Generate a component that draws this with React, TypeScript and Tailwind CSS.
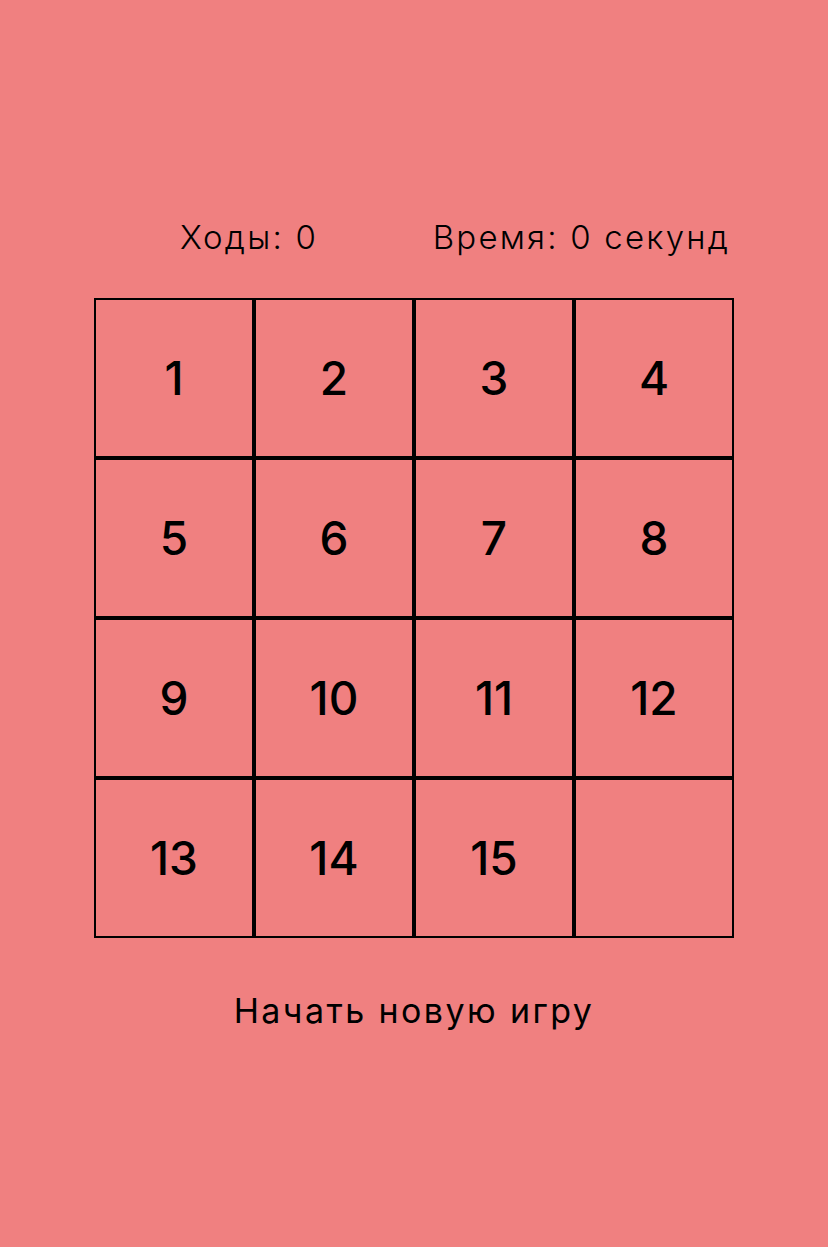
import React from "react";

export default function App() {
  const cells = [1, 2, 3, 4, 5, 6, 7, 8, 9, 10, 11, 12, 13, 14, 15, 0];
  return (
    <div
      className="w-[828px] h-[1247px] bg-[#f08080] text-black flex flex-col items-center"
      style={{ fontFamily: "Inter, 'Noto Sans', sans-serif" }}
    >
      <div className="w-[640px] h-[60px] mt-[207px] flex items-center text-[33px] font-light leading-none tracking-[2.2px]">
        <span className="ml-[86px]">Ходы: 0</span>
        <span className="ml-auto mr-[4px]">Время: 0 секунд</span>
      </div>
      <div className="mt-[31px] grid grid-cols-4 w-[640px]">
        {cells.map((n, i) => (
          <div
            key={i}
            className="h-[160px] border-2 border-black flex items-center justify-center text-[46px] font-medium leading-none"
          >
            {n ? n : ""}
          </div>
        ))}
      </div>
      <div className="mt-[56px] text-[34px] leading-none tracking-[2.4px]">Начать новую игру</div>
    </div>
  );
}
